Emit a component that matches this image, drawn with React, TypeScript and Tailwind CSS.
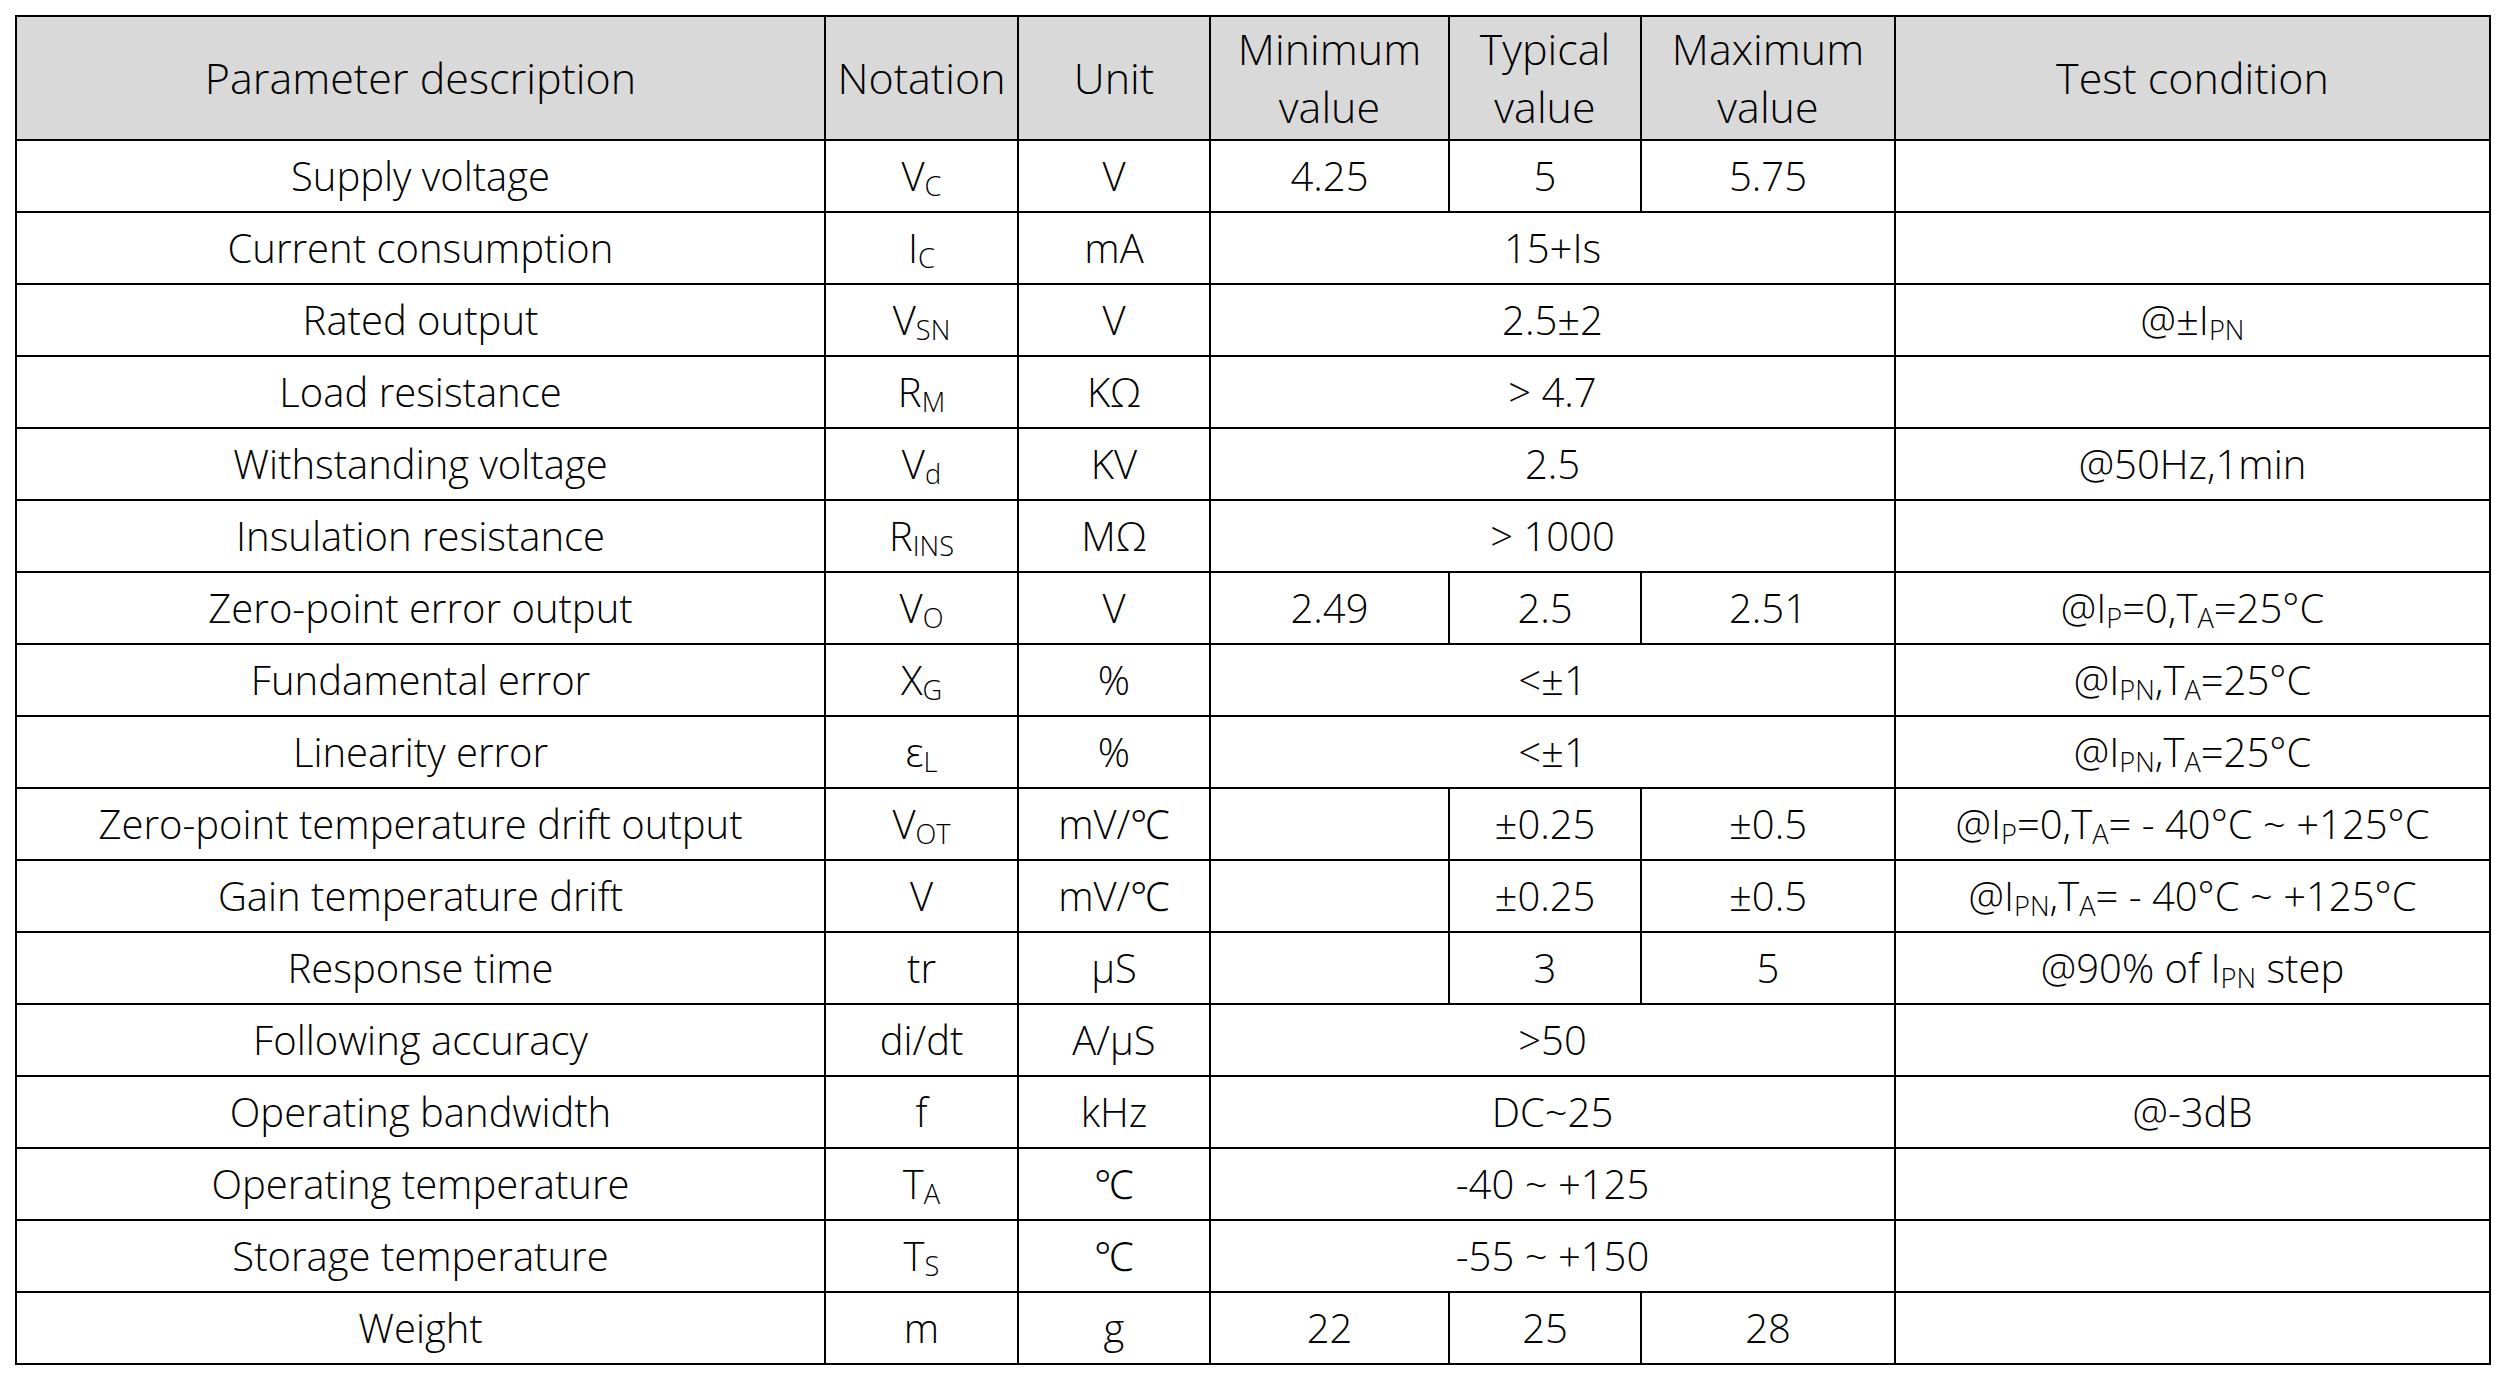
import type { ReactNode } from 'react';

const S = ({ children }: { children: ReactNode }) => (
  <sub className="relative bottom-[-0.2em] align-baseline text-[0.68em] leading-none">{children}</sub>
);

type Row = {
  name: string;
  sym: ReactNode;
  unit: string;
  // either three separate values or one merged value
  vals: [string, string, string] | string;
  cond?: ReactNode;
};

const rows: Row[] = [
  { name: 'Supply voltage', sym: <>V<S>C</S></>, unit: 'V', vals: ['4.25', '5', '5.75'] },
  { name: 'Current consumption', sym: <>I<S>C</S></>, unit: 'mA', vals: '15+Is' },
  { name: 'Rated output', sym: <>V<S>SN</S></>, unit: 'V', vals: '2.5±2', cond: <>@±I<S>PN</S></> },
  { name: 'Load resistance', sym: <>R<S>M</S></>, unit: 'KΩ', vals: '> 4.7' },
  { name: 'Withstanding voltage', sym: <>V<S>d</S></>, unit: 'KV', vals: '2.5', cond: '@50Hz,1min' },
  { name: 'Insulation resistance', sym: <>R<S>INS</S></>, unit: 'MΩ', vals: '> 1000' },
  {
    name: 'Zero-point error output',
    sym: <>V<S>O</S></>,
    unit: 'V',
    vals: ['2.49', '2.5', '2.51'],
    cond: <>@I<S>P</S>=0,T<S>A</S>=25°C</>,
  },
  { name: 'Fundamental error', sym: <>X<S>G</S></>, unit: '%', vals: '<±1', cond: <>@I<S>PN</S>,T<S>A</S>=25°C</> },
  { name: 'Linearity error', sym: <>ε<S>L</S></>, unit: '%', vals: '<±1', cond: <>@I<S>PN</S>,T<S>A</S>=25°C</> },
  {
    name: 'Zero-point temperature drift output',
    sym: <>V<S>OT</S></>,
    unit: 'mV/℃',
    vals: ['', '±0.25', '±0.5'],
    cond: <>@I<S>P</S>=0,T<S>A</S>= - 40°C ~ +125°C</>,
  },
  {
    name: 'Gain temperature drift',
    sym: 'V',
    unit: 'mV/℃',
    vals: ['', '±0.25', '±0.5'],
    cond: <>@I<S>PN</S>,T<S>A</S>= - 40°C ~ +125°C</>,
  },
  { name: 'Response time', sym: 'tr', unit: 'μS', vals: ['', '3', '5'], cond: <>@90% of I<S>PN</S> step</> },
  { name: 'Following accuracy', sym: 'di/dt', unit: 'A/μS', vals: '>50' },
  { name: 'Operating bandwidth', sym: 'f', unit: 'kHz', vals: 'DC~25', cond: '@-3dB' },
  { name: 'Operating temperature', sym: <>T<S>A</S></>, unit: '℃', vals: '-40 ~ +125' },
  { name: 'Storage temperature', sym: <>T<S>S</S></>, unit: '℃', vals: '-55 ~ +150' },
  { name: 'Weight', sym: 'm', unit: 'g', vals: ['22', '25', '28'] },
];

const cell = 'border-2 border-black p-0 text-center align-middle whitespace-nowrap';
const head = `${cell} text-[43px] font-light leading-[58px]`;

export default function App() {
  return (
    <div className="min-h-screen bg-white pl-[15px] pt-[15px]">
      <table
        className="table-fixed border-collapse text-[40px] font-light leading-[1.45] text-black"
        style={{ width: 2474, fontFamily: '"Open Sans", "Noto Sans", sans-serif' }}
      >
        <colgroup>
          <col className="w-[809px]" />
          <col className="w-[193px]" />
          <col className="w-[192px]" />
          <col className="w-[239px]" />
          <col className="w-[192px]" />
          <col className="w-[254px]" />
          <col className="w-[595px]" />
        </colgroup>
        <thead>
          <tr className="h-[124px] bg-[#d9d9d9]">
            <th className={head}>Parameter description</th>
            <th className={head}>Notation</th>
            <th className={head}>Unit</th>
            <th className={head}>
              Minimum
              <br />
              value
            </th>
            <th className={head}>
              Typical
              <br />
              value
            </th>
            <th className={head}>
              Maximum
              <br />
              value
            </th>
            <th className={head}>Test condition</th>
          </tr>
        </thead>
        <tbody>
          {rows.map((r) => (
            <tr key={r.name} className="h-[72px]">
              <td className={cell}>{r.name}</td>
              <td className={cell}>{r.sym}</td>
              <td className={cell}>{r.unit}</td>
              {typeof r.vals === 'string' ? (
                <td colSpan={3} className={cell}>
                  {r.vals}
                </td>
              ) : (
                r.vals.map((v, i) => (
                  <td key={i} className={cell}>
                    {v}
                  </td>
                ))
              )}
              <td className={cell}>{r.cond}</td>
            </tr>
          ))}
        </tbody>
      </table>
    </div>
  );
}
